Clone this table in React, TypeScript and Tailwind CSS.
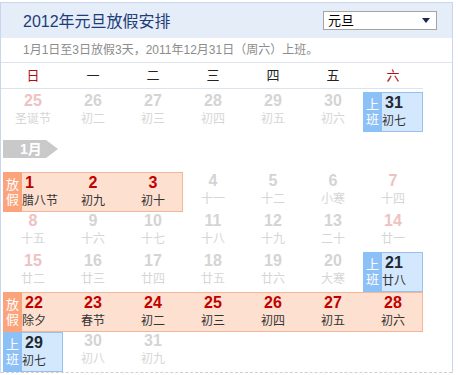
type Day = { n: number; l: string; tone?: "pale" | "weekend" };
type Seg = { type: "off" | "work"; days: Day[] };
type Item = Day | Seg;

const weekdays = ["日", "一", "二", "三", "四", "五", "六"];

// calendar rows, "1月" tag goes after the first one
const rows: Item[][] = [
  [
    { n: 25, l: "圣诞节", tone: "weekend" },
    { n: 26, l: "初二" },
    { n: 27, l: "初三" },
    { n: 28, l: "初四" },
    { n: 29, l: "初五" },
    { n: 30, l: "初六" },
    { type: "work", days: [{ n: 31, l: "初七" }] },
  ],
  [
    { type: "off", days: [{ n: 1, l: "腊八节" }, { n: 2, l: "初九" }, { n: 3, l: "初十" }] },
    { n: 4, l: "十一" },
    { n: 5, l: "十二" },
    { n: 6, l: "小寒" },
    { n: 7, l: "十四", tone: "weekend" },
  ],
  [
    { n: 8, l: "十五", tone: "weekend" },
    { n: 9, l: "十六" },
    { n: 10, l: "十七" },
    { n: 11, l: "十八" },
    { n: 12, l: "十九" },
    { n: 13, l: "二十" },
    { n: 14, l: "廿一", tone: "weekend" },
  ],
  [
    { n: 15, l: "廿二", tone: "weekend" },
    { n: 16, l: "廿三" },
    { n: 17, l: "廿四" },
    { n: 18, l: "廿五" },
    { n: 19, l: "廿六" },
    { n: 20, l: "大寒" },
    { type: "work", days: [{ n: 21, l: "廿八" }] },
  ],
  [
    {
      type: "off",
      days: [
        { n: 22, l: "除夕" },
        { n: 23, l: "春节" },
        { n: 24, l: "初二" },
        { n: 25, l: "初三" },
        { n: 26, l: "初四" },
        { n: 27, l: "初五" },
        { n: 28, l: "初六" },
      ],
    },
  ],
  [
    { type: "work", days: [{ n: 29, l: "初七" }] },
    { n: 30, l: "初八" },
    { n: 31, l: "初九" },
  ],
];

const spans: Record<number, string> = {
  1: "col-span-1 grid-cols-1",
  3: "col-span-3 grid-cols-3",
  7: "col-span-7 grid-cols-7",
};

function PlainCell({ d }: { d: Day }) {
  return (
    <div className="flex h-[40px] flex-col items-center">
      <span
        className={
          "text-[16px] font-bold leading-[18px] " +
          (d.tone === "weekend" ? "text-[#edc2c2]" : "text-[#d4d4d4]")
        }
      >
        {d.n}
      </span>
      <span className="text-[12px] leading-[18px] text-[#d6d6d6]">{d.l}</span>
    </div>
  );
}

function Segment({ seg }: { seg: Seg }) {
  const off = seg.type === "off";
  return (
    <div
      className={
        "relative grid h-[40px] " +
        spans[seg.days.length] +
        (off
          ? " bg-[#fde0cf] shadow-[inset_0_0_0_1px_#f2b797]"
          : " bg-[#d3e8fd] shadow-[inset_0_0_0_1px_#95c0ef]")
      }
    >
      <div
        className={
          "absolute left-0 top-0 bottom-0 flex w-[19px] flex-col items-center justify-center text-[13px] leading-[15px] text-white " +
          (off ? "bg-[#fba47c]" : "bg-[#8cc1f7]")
        }
      >
        <span>{off ? "放" : "上"}</span>
        <span>{off ? "假" : "班"}</span>
      </div>
      {seg.days.map((d, i) => (
        <div
          key={d.n}
          className={
            "flex flex-col pt-[2px] " + (i === 0 ? "items-start pl-[19px]" : "items-center")
          }
        >
          <span
            className={
              "text-[16px] font-bold leading-[18px] " +
              (i === 0 ? "pl-[3px] " : "") +
              (off ? "text-[#c10000]" : "text-[#222831]")
            }
          >
            {d.n}
          </span>
          <span className="text-[12px] leading-[18px] text-[#333]">{d.l}</span>
        </div>
      ))}
    </div>
  );
}

function Row({ items }: { items: Item[] }) {
  return (
    <div className="grid w-[420px] grid-cols-7">
      {items.map((it, i) =>
        "type" in it ? <Segment key={i} seg={it} /> : <PlainCell key={i} d={it} />
      )}
    </div>
  );
}

export default function App() {
  return (
    <div className="h-[375px] w-[458px] overflow-hidden bg-white pt-[2px] font-['Liberation_Sans','Noto_Sans_CJK_SC',sans-serif]">
      <div className="w-[453px] border-x border-t border-[#c8d6ee]">
        {/* header */}
        <div className="flex h-[35px] items-center justify-between bg-[#e5edf9] pl-[22px] pr-[15px]">
          <span className="pt-[2px] text-[16px] text-[#1e3c78]">2012年元旦放假安排</span>
          <div className="flex h-[19px] w-[114px] items-center justify-between border border-[#a4a4a4] bg-white pl-[4px] pr-[6px] text-[13px] text-black">
            <span>元旦</span>
            <svg width="8" height="5" viewBox="0 0 8 5">
              <path d="M0 0h8L4 5z" fill="#1b2656" />
            </svg>
          </div>
        </div>
        <div className="flex h-[25px] items-center border-b border-[#dde3ec] pl-[22px] text-[12px] text-[#8c8c8c]">
          1月1日至3日放假3天，2011年12月31日（周六）上班。
        </div>
        {/* weekdays */}
        <div className="grid h-[26px] w-[422px] grid-cols-7 border-b border-[#dde3ec] pl-[2px] text-[13px]">
          {weekdays.map((w, i) => (
            <div
              key={w}
              className={
                "flex items-center justify-center " +
                (i === 0 || i === 6 ? "text-[#aa1111]" : "text-[#222]")
              }
            >
              {w}
            </div>
          ))}
        </div>
        {/* days */}
        <div className="flex flex-col pl-[2px] pt-[3px]">
          <Row items={rows[0]} />
          <div className="flex h-[40px] items-start pt-[8px]">
            <div className="flex h-[18px] w-[56px] items-center bg-[#c9c9c9] pl-[17px] text-[14px] font-bold text-white [clip-path:polygon(0_0,43px_0,55px_50%,43px_100%,0_100%)]">
              1月
            </div>
          </div>
          {rows.slice(1).map((r, i) => (
            <Row key={i} items={r} />
          ))}
        </div>
        <div className="border-b border-dashed border-[#cfcfcf]" />
      </div>
    </div>
  );
}
